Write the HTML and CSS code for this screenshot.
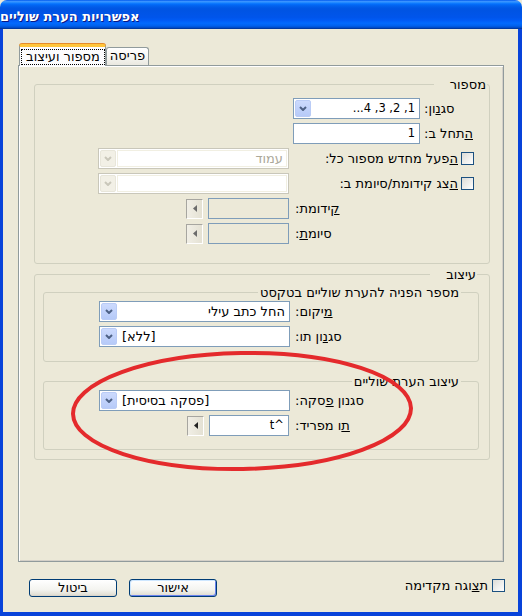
FILE: index.html
```html
<!DOCTYPE html>
<html lang="he">
<head>
    <meta charset="UTF-8">
    <title>אפשרויות הערת שוליים</title>
    <link rel="stylesheet" href="styles.css">
</head>
<body>
<div class="window">
    <div class="titlebar"><span class="title">אפשרויות הערת שוליים</span></div>

    <div class="client">
        <div class="tabs">
            <div class="tab active"><span class="focus">מספור ועיצוב</span></div>
            <div class="tab">פריסה</div>
        </div>

        <div class="panel">
            <!-- numbering -->
            <div class="group numbering">
                <div class="group-title">מספור</div>

                <div class="row first row-style">
                    <div class="combo w127">
                        <span class="drop"><svg width="8" height="5" viewBox="0 0 8 5"><path d="M1 1 L4 4 L7 1" fill="none" stroke="#4D6185" stroke-width="2"/></svg></span>
                        <span class="value latin">1, 2, 3, 4...</span>
                    </div>
                    <span class="label">סג<u>נ</u>ון:</span>
                </div>

                <div class="row row-style">
                    <div class="field latin w127">1</div>
                    <span class="label"><u>ה</u>תחל ב:</span>
                </div>

                <div class="row row-check">
                    <div class="combo off w191">
                        <span class="drop"><svg width="8" height="5" viewBox="0 0 8 5"><path d="M1 1 L4 4 L7 1" fill="none" stroke="#C9C7BA" stroke-width="2"/></svg></span>
                        <span class="value">עמוד</span>
                    </div>
                    <span class="label push"><u>ה</u>פעל מחדש מספור כל:</span>
                    <span class="check"></span>
                </div>

                <div class="row row-check">
                    <div class="combo off w191">
                        <span class="drop"><svg width="8" height="5" viewBox="0 0 8 5"><path d="M1 1 L4 4 L7 1" fill="none" stroke="#C9C7BA" stroke-width="2"/></svg></span>
                        <span class="value"></span>
                    </div>
                    <span class="label push"><u>ה</u>צג קידומת/סיומת ב:</span>
                    <span class="check"></span>
                </div>

                <div class="row row-affix">
                    <span class="spin"><svg width="4" height="7" viewBox="0 0 4 7"><path d="M0 3.5 L4 0 L4 7 Z" fill="#6B6B6B"/></svg></span>
                    <div class="field off w81"></div>
                    <span class="label wide"><u>ק</u>ידומת:</span>
                </div>

                <div class="row row-affix">
                    <span class="spin"><svg width="4" height="7" viewBox="0 0 4 7"><path d="M0 3.5 L4 0 L4 7 Z" fill="#6B6B6B"/></svg></span>
                    <div class="field off w81"></div>
                    <span class="label wide">סיומ<u>ת</u>:</span>
                </div>
            </div>

            <!-- formatting -->
            <div class="group formatting">
                <div class="group-title">עיצוב</div>

                <div class="group inner ref">
                    <div class="group-title">מספר הפניה להערת שוליים בטקסט</div>

                    <div class="row near row-inner">
                        <div class="combo w191">
                            <span class="drop"><svg width="8" height="5" viewBox="0 0 8 5"><path d="M1 1 L4 4 L7 1" fill="none" stroke="#4D6185" stroke-width="2"/></svg></span>
                            <span class="value">החל כתב עילי</span>
                        </div>
                        <span class="label gap5"><u>מ</u>יקום:</span>
                    </div>

                    <div class="row row-inner">
                        <div class="combo w191">
                            <span class="drop"><svg width="8" height="5" viewBox="0 0 8 5"><path d="M1 1 L4 4 L7 1" fill="none" stroke="#4D6185" stroke-width="2"/></svg></span>
                            <span class="value left">[ללא]</span>
                        </div>
                        <span class="label gap5">סג<u>נ</u>ון תו:</span>
                    </div>
                </div>

                <div class="group inner notes">
                    <div class="group-title">עיצוב הערת שוליים</div>

                    <div class="row near row-inner">
                        <div class="combo w191">
                            <span class="drop"><svg width="8" height="5" viewBox="0 0 8 5"><path d="M1 1 L4 4 L7 1" fill="none" stroke="#4D6185" stroke-width="2"/></svg></span>
                            <span class="value left">[פסקה בסיסית]</span>
                        </div>
                        <span class="label gap5">סגנון <u>פ</u>סקה:</span>
                    </div>

                    <div class="row row-sep">
                        <span class="spin"><svg width="4" height="7" viewBox="0 0 4 7"><path d="M0 3.5 L4 0 L4 7 Z" fill="#222"/></svg></span>
                        <div class="field latin w80">^t</div>
                        <span class="label wide"><u>ת</u>ו מפריד:</span>
                    </div>
                </div>
            </div>
        </div>

        <div class="footer">
            <button class="btn" type="button">ביטול</button>
            <button class="btn default" type="button">אישור</button>
            <div class="preview">
                <span class="label">ת<u>צ</u>וגה מקדימה</span>
                <span class="check"></span>
            </div>
        </div>
    </div>

    <svg class="mark" width="522" height="616" viewBox="0 0 522 616">
        <ellipse cx="242" cy="411" rx="169" ry="58" transform="rotate(-1 242 411)" fill="none" stroke="#E42A2C" stroke-width="4"/>
    </svg>
</div>
</body>
</html>
```

FILE: styles.css
```css
* {
    box-sizing: border-box;
}

html, body {
    margin: 0;
    padding: 0;
    background: #ECE9D8;
}

body {
    font-family: "DejaVu Sans", "Liberation Sans", sans-serif;
    font-size: 13px;
    color: #000;
}

.window {
    position: relative;
    width: 522px;
    height: 616px;
    display: flex;
    flex-direction: column;
    overflow: hidden;
}

/* title bar */
.titlebar {
    flex: none;
    height: 29px;
    border-radius: 7px 7px 0 0;
    background: linear-gradient(#0058EE 0%, #3A93FF 5%, #288EFF 8%, #127DFF 11%, #036FFC 14%, #0262EE 20%, #0057E5 28%, #0054E3 35%, #0055EB 60%, #005BF5 70%, #026AFE 80%, #0062EF 88%, #0052D6 94%, #0040AB 97%, #003092 100%);
    display: flex;
    justify-content: flex-end;
    align-items: center;
    padding: 3px 12px 0 0;
    color: #fff;
    font-weight: bold;
    font-size: 13px;
    text-shadow: 1px 1px #0A1883;
    direction: rtl;
}

/* window body */
.client {
    flex: 1;
    background: #ECE9D8;
    border-style: solid;
    border-color: #0843DA;
    border-width: 0 4px 4px 3px;
    padding: 15px 14px 0 15px;
}

/* tabs */
.tabs {
    display: flex;
    align-items: flex-end;
    height: 21px;
    padding-left: 1px;
}

.tab {
    width: 43px;
    height: 18px;
    border: 1px solid #919B9C;
    border-bottom: none;
    border-radius: 3px 3px 0 0;
    background: linear-gradient(#FFFFFF, #F6F6F2 50%, #EAE8E0);
    text-align: center;
    line-height: 16px;
    direction: rtl;
    white-space: nowrap;
}

.tab.active {
    position: relative;
    z-index: 1;
    width: 87px;
    height: 22px;
    margin-bottom: -1px;
    border-top: 3px solid #FFC63C;
    box-shadow: 0 -1px 0 #E68B2C;
    background: #FCFCFE;
    padding: 2px 0 0 1px;
}

.focus {
    display: block;
    height: 16px;
    width: 84px;
    outline: 1px dotted #000;
    outline-offset: -1px;
    line-height: 15px;
}

/* tab body */
.panel {
    height: 497px;
    border: 1px solid #919B9C;
    box-shadow: inset 1px 1px #fff, inset -1px -1px #D4D0C8;
    background: #ECE9D8;
    padding: 18px 13px 0 15px;
}

/* group boxes */
.group {
    border: 1px solid #D0D0BF;
    border-radius: 3px;
}

.group-title {
    width: fit-content;
    margin: -7px 2px 0 auto;
    padding: 0 1px 0 16px;
    line-height: 13px;
    background: #ECE9D8;
    direction: rtl;
    white-space: nowrap;
}

.numbering {
    padding-bottom: 19px;
}

.formatting {
    margin-top: 10px;
    padding: 0 10px 9px 8px;
}

.inner .group-title {
    margin-right: 17px;
    padding: 0 2px;
}

.ref {
    margin-top: 11px;
    padding-bottom: 14px;
}

.notes {
    margin-top: 19px;
    padding-bottom: 13px;
}

/* rows */
.row {
    display: flex;
    align-items: center;
    height: 21px;
    margin-top: 4px;
}

.row.first {
    margin-top: 7px;
}

.row.near {
    margin-top: 2px;
}

.row-style {
    padding-left: 258px;
}

.row-check {
    padding-left: 63px;
    padding-right: 15px;
}

.row-affix {
    padding-left: 151px;
}

.row-inner {
    padding-left: 55px;
}

.row-sep {
    padding-left: 143px;
}

.label {
    direction: rtl;
    white-space: nowrap;
    margin-left: 4px;
}

.label.push {
    margin-left: auto;
    margin-right: 3px;
}

.label.wide {
    margin-left: 6px;
}

.label.gap5 {
    margin-left: 5px;
}

/* controls */
.w127 { width: 127px; }
.w191 { width: 191px; }
.w81 { width: 81px; }
.w80 { width: 80px; }

.combo {
    display: flex;
    height: 21px;
    border: 1px solid #7F9DB9;
    background: #fff;
    padding: 1px;
}

.drop {
    flex: none;
    width: 16px;
    height: 17px;
    border: 1px solid #BACCF6;
    border-radius: 2px;
    background: linear-gradient(#CCDAFD, #B6CAF8);
    display: flex;
    align-items: center;
    justify-content: center;
}

.value {
    flex: 1;
    direction: rtl;
    text-align: right;
    padding: 0 3px;
    line-height: 17px;
    white-space: nowrap;
    overflow: hidden;
}

.value.left {
    text-align: left;
    padding-left: 5px;
}

.latin {
    font-size: 11.5px;
}

.combo.off {
    border-color: #C9C7BA;
}

.combo.off .drop {
    border-color: #E8E6DA;
    background: #F2F0E6;
}

.combo.off .value {
    color: #ACA899;
    border: 1px solid #F1EFE2;
    margin-left: 1px;
    line-height: 15px;
}

.field {
    height: 21px;
    border: 1px solid #7F9DB9;
    background: #fff;
    direction: rtl;
    text-align: right;
    padding: 0 4px;
    line-height: 19px;
}

.field.off {
    background: #ECE9D8;
}

.spin {
    flex: none;
    width: 17px;
    height: 20px;
    margin-right: 5px;
    border: 1px solid;
    border-color: #A7A6A0 #fff #fff #A7A6A0;
    background: linear-gradient(90deg, #F1EFE6, #E4E1D3);
    display: flex;
    align-items: center;
    justify-content: center;
}

.check {
    flex: none;
    width: 13px;
    height: 13px;
    border: 1px solid #1C5180;
    background: linear-gradient(135deg, #DCDCD7, #FFFFFF);
}

/* bottom buttons */
.footer {
    display: flex;
    align-items: flex-start;
    margin-top: 17px;
    padding-left: 11px;
}

.btn {
    width: 88px;
    height: 18px;
    margin: 0 12px 0 0;
    padding: 0;
    border: 1px solid #003C74;
    border-radius: 3px;
    background: linear-gradient(#FFFFFF, #F4F4F0 60%, #E3E1D7 90%, #D6D0C5);
    font-family: inherit;
    font-size: 13px;
    line-height: 14px;
    color: #000;
    direction: rtl;
}

.btn.default {
    box-shadow: inset 1px 1px #CEE7FF, inset -1px -1px #6982EE;
}

.preview {
    display: flex;
    align-items: center;
    height: 13px;
    margin-left: auto;
    margin-right: -1px;
}

.preview .label {
    margin-right: 4px;
}

/* hand drawn mark on the screenshot */
.mark {
    position: absolute;
    left: 0;
    top: 0;
    pointer-events: none;
}
```
